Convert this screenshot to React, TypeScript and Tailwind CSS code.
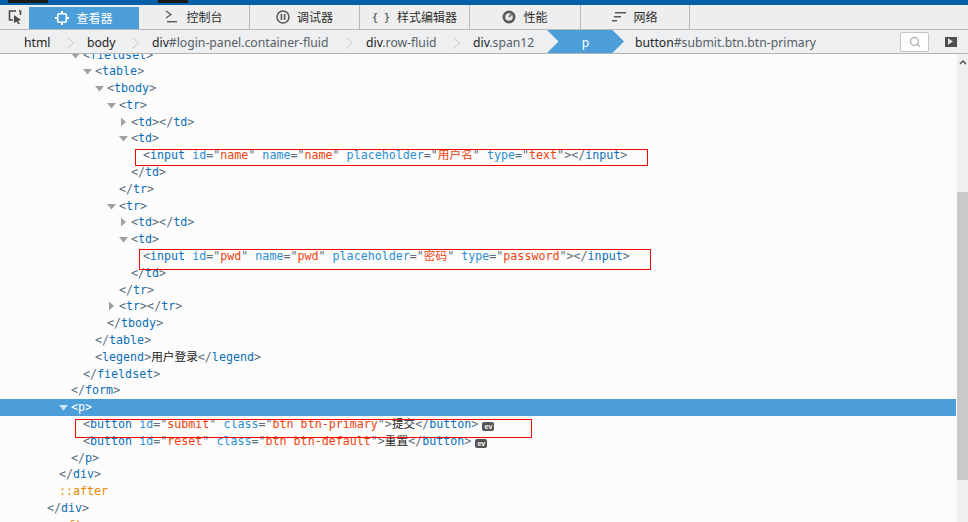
import { Search } from "lucide-react";

type Tok = { c: string; t: string };

const tag = "text-[#0b6fb8]";
const attr = "text-[#2a8fd6]";
const val = "text-[#f0420f]";
const dark = "text-[#222222]";

function T({ k, children }: { k: string; children: string }) {
  return <span className={k}>{children}</span>;
}

const p = (s: string): Tok => ({ c: "text-[#5f6f7c]", t: s });
const n = (s: string): Tok => ({ c: tag, t: s });
const a = (s: string): Tok => ({ c: attr, t: s });
const v = (s: string): Tok => ({ c: val, t: s });
const z = (s: string): Tok => ({ c: dark, t: s });

function simple(name: string): Tok[] {
  return [p("<"), n(name), p(">")];
}
function close(name: string): Tok[] {
  return [p("</"), n(name), p(">")];
}
function pair(name: string, inner?: string): Tok[] {
  return [...simple(name), ...(inner ? [z(inner)] : []), ...close(name)];
}

type Row = { x: number; arrow?: "down" | "right"; toks: Tok[]; selected?: boolean; ev?: boolean };

const rows: Row[] = [
  { x: 83, arrow: "down", toks: simple("fieldset") },
  { x: 95, arrow: "down", toks: simple("table") },
  { x: 107, arrow: "down", toks: simple("tbody") },
  { x: 119, arrow: "down", toks: simple("tr") },
  { x: 131, arrow: "right", toks: pair("td") },
  { x: 131, arrow: "down", toks: simple("td") },
  {
    x: 143,
    toks: [p("<"), n("input"), a(" id"), p('="'), v("name"), p('"'), a(" name"), p('="'), v("name"), p('"'), a(" placeholder"), p('="'), v("用户名"), p('"'), a(" type"), p('="'), v("text"), p('"'), p(">"), ...close("input")],
  },
  { x: 131, toks: close("td") },
  { x: 119, toks: close("tr") },
  { x: 119, arrow: "down", toks: simple("tr") },
  { x: 131, arrow: "right", toks: pair("td") },
  { x: 131, arrow: "down", toks: simple("td") },
  {
    x: 143,
    toks: [p("<"), n("input"), a(" id"), p('="'), v("pwd"), p('"'), a(" name"), p('="'), v("pwd"), p('"'), a(" placeholder"), p('="'), v("密码"), p('"'), a(" type"), p('="'), v("password"), p('"'), p(">"), ...close("input")],
  },
  { x: 131, toks: close("td") },
  { x: 119, toks: close("tr") },
  { x: 119, arrow: "right", toks: pair("tr") },
  { x: 107, toks: close("tbody") },
  { x: 95, toks: close("table") },
  { x: 95, toks: pair("legend", "用户登录") },
  { x: 83, toks: close("fieldset") },
  { x: 71, toks: close("form") },
  { x: 71, arrow: "down", toks: simple("p"), selected: true },
  {
    x: 83,
    ev: true,
    toks: [p("<"), n("button"), a(" id"), p('="'), v("submit"), p('"'), a(" class"), p('="'), v("btn btn-primary"), p('"'), p(">"), z("提交"), ...close("button")],
  },
  {
    x: 83,
    ev: true,
    toks: [p("<"), n("button"), a(" id"), p('="'), v("reset"), p('"'), a(" class"), p('="'), v("btn btn-default"), p('"'), p(">"), z("重置"), ...close("button")],
  },
  { x: 71, toks: close("p") },
  { x: 59, toks: close("div") },
  { x: 59, toks: [{ c: "text-[#e58a00]", t: "::after" }] },
  { x: 47, toks: close("div") },
  { x: 47, toks: [{ c: "text-[#e58a00]", t: "::after" }] },
];

function Arrow({ dir, light }: { dir: "down" | "right"; light?: boolean }) {
  const fill = light ? "#cfe4f5" : "#a0a0a0";
  return (
    <svg width="10" height="10" viewBox="0 0 10 10" className="absolute -left-[12px] top-[3px]">
      {dir === "down" ? <path d="M0 3 H9 L4.5 8.5 Z" fill={fill} /> : <path d="M2 0.5 L7 5 L2 9.5 Z" fill={fill} />}
    </svg>
  );
}

function Tree() {
  return (
    <div className="-mt-[7.5px] w-[956px] font-['DejaVu_Sans_Mono','Noto_Sans_CJK_SC',monospace] text-[11.67px] leading-[16.8px] whitespace-pre">
      {rows.map((r, i) => (
        <div key={i} className={`h-[16.8px] ${r.selected ? "bg-[#4c9ed9]" : ""}`}>
          <div className="relative inline-block" style={{ marginLeft: r.x }}>
            {r.arrow && <Arrow dir={r.arrow} light={r.selected} />}
            {r.toks.map((tk, j) => (
              <T key={j} k={r.selected ? "text-white" : tk.c}>
                {tk.t}
              </T>
            ))}
            {r.ev && (
              <span className="ml-[4px] inline-flex h-[9px] w-[12px] items-center justify-center rounded-[2px] bg-[#555555] align-[-1px] font-['Liberation_Sans',sans-serif] text-[7px] font-bold leading-none text-white">
                ev
              </span>
            )}
          </div>
        </div>
      ))}
    </div>
  );
}

function Icon({ name }: { name: string }) {
  const c = "#585858";
  if (name === "pause")
    return (
      <svg width="14" height="14" viewBox="0 0 14 14">
        <circle cx="7" cy="7" r="6" fill="none" stroke={c} strokeWidth="1.5" />
        <rect x="4.6" y="4" width="1.6" height="6" fill={c} />
        <rect x="7.8" y="4" width="1.6" height="6" fill={c} />
      </svg>
    );
  if (name === "console")
    return (
      <svg width="14" height="14" viewBox="0 0 14 14">
        <path d="M1 1 L6 4.5 L1 8" fill="none" stroke={c} strokeWidth="1.3" />
        <rect x="2" y="11" width="10" height="1.4" fill={c} />
      </svg>
    );
  if (name === "braces")
    return <span className="font-['DejaVu_Sans_Mono',monospace] text-[10px] font-bold text-[#666666]">{"{ }"}</span>;
  if (name === "perf")
    return (
      <svg width="14" height="14" viewBox="0 0 14 14">
        <circle cx="7" cy="7" r="6.5" fill={c} />
        <circle cx="7" cy="7" r="3.8" fill="#e8e8e8" />
        <path d="M7 7 L9.5 4" stroke={c} strokeWidth="1.4" />
      </svg>
    );
  if (name === "net")
    return (
      <svg width="14" height="12" viewBox="0 0 14 12">
        <rect x="3" y="1" width="11" height="1.5" fill={c} />
        <rect x="2" y="5" width="7" height="1.5" fill={c} />
        <rect x="0" y="9" width="5" height="1.5" fill={c} />
      </svg>
    );
  return (
    <svg width="14" height="14" viewBox="0 0 14 14">
      <rect x="2.7" y="2.7" width="8.6" height="8.6" rx="1" fill="none" stroke="white" strokeWidth="1.6" />
      <rect x="6" y="0" width="2" height="2" fill="white" />
      <rect x="6" y="12" width="2" height="2" fill="white" />
      <rect x="0" y="6" width="2" height="2" fill="white" />
      <rect x="12" y="6" width="2" height="2" fill="white" />
    </svg>
  );
}

const tabs = [
  { label: "查看器", icon: "cpu", w: "w-[110px]", on: true },
  { label: "控制台", icon: "console", w: "w-[111px]" },
  { label: "调试器", icon: "pause", w: "w-[110px]" },
  { label: "样式编辑器", icon: "braces", w: "w-[110px]" },
  { label: "性能", icon: "perf", w: "w-[111px]" },
  { label: "网络", icon: "net", w: "w-[109px]" },
];

const crumbs = [
  { t: "html", w: "w-[63px]" },
  { t: "body", w: "w-[65px]" },
  { t: "div", rest: "#login-panel.container-fluid", w: "w-[214px]" },
  { t: "div", rest: ".row-fluid", w: "w-[107px]" },
  { t: "div", rest: ".span12", w: "w-[74px]", last: true },
];

export default function App() {
  return (
    <div className="flex h-[522px] w-[968px] flex-col overflow-hidden bg-[#fcfcfc] font-['Noto_Sans_CJK_SC','Liberation_Sans',sans-serif]">
      <div className="relative h-[5px] shrink-0 bg-[#0560ab]">
        <div className="absolute left-[8px] top-0 h-[3px] w-[40px] bg-[#1a1a1a]" />
        <div className="absolute left-[158px] top-0 h-[3px] w-[30px] bg-[#1a1a1a]" />
      </div>
      <div className="flex h-[25px] shrink-0 items-stretch border-b border-[#b9b9b9] bg-[#eeeeee]">
        <div className="flex w-[29px] shrink-0 items-center justify-center">
          <svg width="14" height="14" viewBox="0 0 14 14">
            <path d="M8 1 H1.5 V10 H5" fill="none" stroke="#4a4a4a" strokeWidth="1.6" />
            <path d="M11 1 H12.5 V5" fill="none" stroke="#4a4a4a" strokeWidth="1.6" />
            <path d="M6 5 L13 10 L10 11 L12 14 L10 14 L8.5 11.5 L6 13 Z" fill="#4a4a4a" />
          </svg>
        </div>
        {tabs.map((tb) => (
          <div
            key={tb.label}
            className={`flex ${tb.w} shrink-0 items-center justify-center gap-[7px] text-[12px] ${
              tb.on ? "mt-[2px] bg-[#4c9ed9] text-white" : "border-r border-[#b9b9b9] text-[#2e2e2e]"
            }`}
          >
            <Icon name={tb.icon} />
            <span>{tb.label}</span>
          </div>
        ))}
      </div>
      <div className="flex h-[24px] shrink-0 items-center border-b border-[#b3b3b3] bg-[#eeeff1] font-['Noto_Sans','Liberation_Sans',sans-serif] text-[12.2px] text-[#222222]">
        <div className="w-[24px] shrink-0" />
        {crumbs.map((b) => (
          <div key={b.w + b.t} className={`relative ${b.w} shrink-0 pt-[3px]`}>
            <span>{b.t}</span>
            {b.rest && <span className="text-[#555e66]">{b.rest}</span>}
            {!b.last && (
              <svg width="7" height="12" viewBox="0 0 7 12" className="absolute right-[13px] top-[6px]">
                <path d="M0.5 0.5 L6.5 6 L0.5 11.5" fill="none" stroke="#c8c8c8" />
              </svg>
            )}
          </div>
        ))}
        <div className="flex h-[23px] w-[77px] shrink-0 items-center justify-center bg-[#4c9ed9] pt-[3px] text-white [clip-path:polygon(0_0,85%_0,100%_50%,85%_100%,0_100%,15%_50%)]">
          p
        </div>
        <div className="ml-[11px] w-[265px] shrink-0 pt-[3px]">
          button<span className="text-[#555e66]">#submit.btn.btn-primary</span>
        </div>
        <div className="flex h-[20px] w-[29px] shrink-0 items-center justify-center rounded-[2px] border border-[#c6c6c6] bg-white">
          <Search size={12} strokeWidth={3} className="text-[#b5b5b5]" />
        </div>
        <div className="ml-[16px] flex h-[10px] w-[12px] shrink-0 items-center justify-center bg-[#4f4f4f]">
          <div className="h-[8px] w-[10px] bg-[#e6e6e6] [clip-path:polygon(20%_10%,70%_50%,20%_90%)]" />
        </div>
      </div>
      <div className="flex min-h-0 flex-1">
        <div className="relative min-w-0 flex-1 overflow-hidden">
          <Tree />
          <div className="absolute left-[135px] top-[95px] h-[17px] w-[513px] border border-[#ff0000]" />
          <div className="absolute left-[139px] top-[195px] h-[21px] w-[512px] border border-[#ff0000]" />
          <div className="absolute left-[75px] top-[365px] h-[19px] w-[457px] border border-[#ff0000]" />
        </div>
        <div className="flex w-[11px] shrink-0 flex-col bg-[#efefef]">
          <div className="flex h-[16px] shrink-0 items-center justify-center">
            <svg width="8" height="6" viewBox="0 0 8 6">
              <path d="M1 5 L4 2 L7 5" fill="none" stroke="#555555" strokeWidth="1.5" />
            </svg>
          </div>
          <div className="mt-[122px] h-[288px] shrink-0 bg-[#c9c9c9]" />
        </div>
      </div>
    </div>
  );
}
